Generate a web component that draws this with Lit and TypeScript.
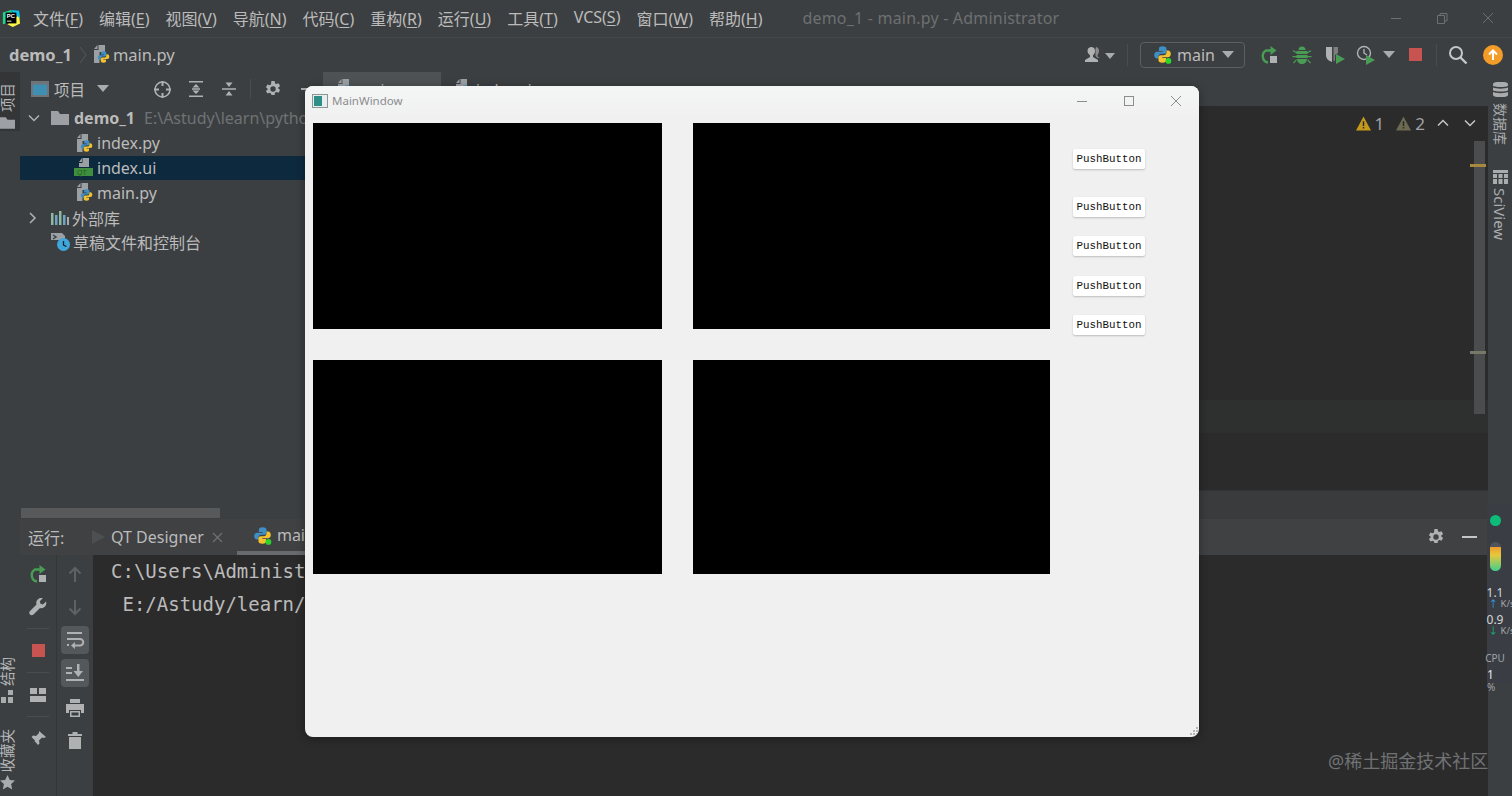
import { LitElement, html, css, svg } from "lit";
import { customElement } from "lit/decorators.js";

const menus = [
  ["文件(", "F", ")"],
  ["编辑(", "E", ")"],
  ["视图(", "V", ")"],
  ["导航(", "N", ")"],
  ["代码(", "C", ")"],
  ["重构(", "R", ")"],
  ["运行(", "U", ")"],
  ["工具(", "T", ")"],
  ["VCS(", "S", ")"],
  ["窗口(", "W", ")"],
  ["帮助(", "H", ")"],
];

const snake = svg`
  <path fill="#3d8fc6" d="M8 1C5.6 1 5 2 5 3.100V5h3.200v.7H3.400C2 5.700 1 6.900 1 8.500s1 2.900 2.300 2.900h1.300V9.700c0-1.300 1-2.300 2.300-2.300h2.700c1 0 1.800-.8 1.800-1.800V3.100C11.400 2 10.400 1 8 1z"/>
  <path fill="#f2c230" d="M8 15c2.400 0 3-1 3-2.100V11H7.800v-.7h4.800c1.400 0 2.400-1.200 2.400-2.800s-1-2.900-2.300-2.900h-1.300v1.700c0 1.300-1 2.300-2.300 2.300H6.400c-1 0-1.800.8-1.800 1.800v2.500C4.600 14 5.600 15 8 15z"/>`;

const py = (dot = false) => html`<svg width="19" height="19" viewBox="0 0 16 16">
  ${snake}${dot ? svg`<circle cx="13" cy="13.400" r="2.400" fill="#2bd62b"/>` : ""}
</svg>`;

const pyFile = html`<svg width="17" height="19" viewBox="0 0 17 19">
  <path fill="#9aa0a4" d="M1 5h4.500V0H12v7H6.500v11H1zM1 4l3.500-4v4z"/>
  <g transform="translate(4 5.500) scale(.82)">${snake}</g>
</svg>`;

const qtFile = html`<svg width="20" height="19" viewBox="0 0 20 19">
  <path fill="#9aa0a4" d="M5 9V5h3.500V0H15v9zM5 4l3-4v4z"/>
  <rect x="0" y="10" width="19" height="8" fill="#3f8f3f"/>
  <text x="3" y="17" font-size="7" font-family="Liberation Sans" fill="#1e5c22">QT</text>
</svg>`;

const folder = html`<svg width="18" height="16" viewBox="0 0 18 16"><path fill="#9da1a5" d="M0 1h7l2 3h9v11H0z"/></svg>`;

const chevDown = html`<svg width="16" height="16" viewBox="0 0 16 16"><path fill="none" stroke="#afb1b3" stroke-width="1.500" d="M3 5.500l5 5 5-5"/></svg>`;
const chevRight = html`<svg width="16" height="16" viewBox="0 0 16 16"><path fill="none" stroke="#afb1b3" stroke-width="1.500" d="M4 3l5 5-5 5"/></svg>`;
const caret = html`<svg width="12" height="8" viewBox="0 0 12 8"><path fill="#a9abad" d="M0 0h12L6 7z"/></svg>`;

const gear = html`<svg width="18" height="18" viewBox="0 0 18 18">
  <path fill="#afb1b3" fill-rule="evenodd" d="M7.400 1h3.200l.4 2.300 1.300.7 2.200-.8 1.600 2.700-1.800 1.500v1.200l1.800 1.500-1.600 2.700-2.200-.8-1.300.7-.4 2.300H7.400L7 13.500l-1.300-.7-2.200.8-1.600-2.700 1.800-1.500V8.700L1.900 7.200l1.600-2.700 2.200.8L7 4.600zM9 6.300a2.700 2.700 0 1 0 0 5.400 2.700 2.700 0 0 0 0-5.400z"/>
</svg>`;

const rerun = html`<svg width="20" height="20" viewBox="0 0 20 20">
  <path fill="none" stroke="#499c54" stroke-width="2.400" d="M9 17.500A6.500 6.500 0 0 1 7 5.500h6"/>
  <path fill="#499c54" d="M11.500 1l6 4.500-6 4.500z"/>
  <rect x="11" y="11" width="7" height="7" fill="#afb1b3"/>
</svg>`;

const stop = html`<svg width="13" height="13" viewBox="0 0 13 13"><rect width="13" height="13" fill="#c75450"/></svg>`;

const warn = (fill: string) => html`<svg width="15" height="15" viewBox="0 0 16 15">
  <path fill="${fill}" d="M8 0l8 15H0z"/><path fill="#2b2b2b" d="M7.200 5h1.600v5.200H7.200zM7.200 11.200h1.600v1.700H7.200z"/>
</svg>`;

@customElement("app-root")
export class AppRoot extends LitElement {
  static styles = css`
    :host {
      display: block;
      position: relative;
      width: 1512px;
      height: 796px;
      overflow: hidden;
      background: #3c3f41;
      color: #bbbbbb;
      font-family: "Noto Sans", "Noto Sans CJK SC", sans-serif;
      font-size: 16px;
    }
    svg {
      display: block;
      flex: none;
    }

    .title {
      display: flex;
      align-items: center;
      height: 37px;
      box-sizing: border-box;
      padding-bottom: 1px;
      white-space: nowrap;
    }
    .logo {
      width: 18px;
      height: 18px;
      margin: 0 4px 0 2px;
    }
    .menu {
      margin-left: 9px;
      display: flex;
      gap: 16px;
      font-size: 16px;
    }
    .menu u {
      text-underline-offset: 2px;
    }
    .app-name {
      margin-left: 40px;
      color: #6d7072;
      font-size: 16px;
      letter-spacing: 0.2px;
    }
    .win-ctrls {
      margin-left: auto;
      display: flex;
      gap: 30px;
      padding-right: 15px;
    }

    .nav {
      display: flex;
      align-items: center;
      height: 35px;
      border-top: 1px solid #45484a;
      box-sizing: border-box;
      padding: 0 0 1px 9px;
      white-space: nowrap;
    }
    .crumb-root {
      font-weight: 700;
      font-size: 16.500px;
    }
    .crumb-sep {
      margin: 0 6px 0 7px;
    }
    .crumb-file {
      margin-left: 3px;
      font-size: 16.500px;
    }
    .nav-tools {
      margin-left: auto;
      display: flex;
      align-items: center;
      padding-right: 9px;
    }
    .vsep {
      width: 1px;
      height: 22px;
      background: #4a4d4f;
    }
    .user-sep {
      margin-left: 11px;
    }
    .config {
      display: flex;
      align-items: center;
      width: 105px;
      height: 26px;
      box-sizing: border-box;
      margin: 0 14px 0 12px;
      padding: 0 10px 0 12px;
      border: 1px solid #5e6060;
      border-radius: 4px;
      gap: 5px;
    }
    .config svg:last-child {
      margin-left: auto;
    }
    .tool-row {
      display: flex;
      align-items: center;
      gap: 13px;
    }
    .tool-row .tight {
      margin-left: -3px;
    }
    .run-caret {
      margin: 0 14px 0 7px;
    }
    .stop-sep {
      margin: 0 11px 0 14px;
    }
    .update {
      margin-left: 15px;
    }

    .body {
      display: flex;
      height: 724px;
    }
    .left-strip {
      width: 20px;
      flex: none;
      display: flex;
      flex-direction: column;
    }
    .strip-active {
      width: 100%;
      height: 59px;
      background: #333537;
      display: flex;
      flex-direction: column;
      padding-top: 11px;
      box-sizing: border-box;
      gap: 4px;
    }
    .strip-active svg {
      width: 15px;
      height: 14px;
    }
    .vtext-up {
      writing-mode: vertical-rl;
      text-orientation: sideways;
      transform: rotate(180deg);
      font-size: 14.500px;
      line-height: 15px;
      color: #b4b6b8;
      align-self: flex-start;
    }
    .vtext-down {
      writing-mode: vertical-rl;
      text-orientation: sideways;
      font-size: 14px;
      line-height: 18px;
      color: #a9abad;
    }
    .strip-bottom {
      margin-top: auto;
      display: flex;
      flex-direction: column;
      padding-bottom: 6px;
      gap: 3px;
    }
    .strip-gap {
      height: 20px;
    }

    .center {
      flex: 1;
      min-width: 0;
      display: flex;
      flex-direction: column;
    }
    .upper {
      display: flex;
      height: 447px;
    }

    .project {
      width: 303px;
      flex: none;
      position: relative;
      white-space: nowrap;
      overflow: hidden;
    }
    .pane-head {
      display: flex;
      align-items: center;
      height: 34px;
      padding-left: 11px;
    }
    .pane-title {
      margin: 0 12px 0 5px;
      font-size: 15.500px;
    }
    .pane-tools {
      margin-left: 44px;
      display: flex;
      align-items: center;
      gap: 15px;
    }
    .pane-tools .vsep {
      height: 20px;
      margin: 0 -2px 0 -3px;
    }
    .pane-min {
      width: 14px;
      height: 2px;
      background: #afb1b3;
      margin-left: 4px;
    }
    .row {
      display: flex;
      align-items: center;
      height: 24.800px;
      padding-left: 5px;
      font-size: 16px;
    }
    .row.child {
      padding-left: 56px;
      gap: 4px;
    }
    .row.selected {
      background: #0d293e;
    }
    .row.selected svg {
      margin-left: -2px;
      margin-right: -1px;
    }
    .row .slot {
      width: 17px;
      display: flex;
      justify-content: center;
      margin-right: 9px;
    }
    .row .slot.none {
      visibility: hidden;
    }
    .row .name {
      margin-left: 5px;
    }
    .row .name.close {
      margin-left: 3px;
    }
    .row.child .name {
      margin-left: 0;
    }
    .bold {
      font-weight: 700;
    }
    .path {
      color: #6f7274;
      margin-left: 9px;
    }
    .hscroll {
      position: absolute;
      left: 1px;
      bottom: 1px;
      width: 199px;
      height: 10px;
      background: #57595b;
    }

    .editor {
      flex: 1;
      min-width: 0;
      display: flex;
      flex-direction: column;
    }
    .tabs {
      height: 34px;
      flex: none;
      display: flex;
    }
    .tab {
      display: flex;
      gap: 4px;
      width: 118px;
      height: 14px;
      overflow: hidden;
      box-sizing: border-box;
      padding: 7px 0 0 14px;
      font-size: 15px;
      line-height: 20px;
      color: #bbbbbb;
      white-space: nowrap;
    }
    .tab.active {
      background: #4e5254;
    }
    .code {
      flex: 1;
      position: relative;
      background: linear-gradient(
        #2b2b2b 0,
        #2b2b2b 294px,
        #2e2f2f 294px,
        #2e2f2f 327px,
        #2b2b2b 327px
      );
    }
    .inspections {
      display: flex;
      justify-content: flex-end;
      align-items: center;
      gap: 4px;
      height: 34px;
      padding-right: 10px;
      font-size: 17px;
      color: #a0a2a4;
    }
    .inspections .warn-one {
      margin-right: 8px;
    }
    .inspections .warn-two {
      margin-right: 6px;
    }
    .inspections svg.up {
      margin-right: 7px;
    }
    .vscroll {
      position: absolute;
      right: 3px;
      top: 35px;
      width: 11px;
      height: 273px;
      background: #4b4c4d;
    }
    .mark {
      position: absolute;
      right: -1px;
      width: 16px;
      height: 3px;
    }
    .mark.warning {
      top: 23px;
      background: #a8883c;
    }
    .mark.weak {
      top: 210px;
      background: #77776a;
    }
    .editor-crumbs {
      height: 28px;
      flex: none;
      background: #393b3d;
      border-top: 1px solid #323435;
    }

    .run {
      flex: 1;
      display: flex;
      flex-direction: column;
      min-height: 0;
    }
    .run-head {
      height: 36px;
      flex: none;
      display: flex;
      align-items: center;
      background: #3f4143;
      padding-left: 8px;
      white-space: nowrap;
      font-size: 16px;
    }
    .run-label {
      width: 64px;
    }
    .run-tab {
      display: flex;
      align-items: center;
      gap: 5px;
      height: 100%;
    }
    .run-tab .dim {
      margin-right: 1px;
    }
    .run-close {
      margin-left: 3px;
      margin-right: 14px;
    }
    .run-tab.main {
      padding-left: 16px;
      width: 280px;
      box-sizing: border-box;
      gap: 5px;
      border-bottom: 4px solid #686a6c;
    }
    .run-side {
      margin-left: auto;
      display: flex;
      align-items: center;
      gap: 17px;
      padding-right: 11px;
    }
    .run-side .line {
      width: 15px;
      height: 2px;
      background: #c4c6c8;
    }
    .run-body {
      flex: 1;
      display: flex;
      min-height: 0;
    }
    .bar {
      width: 37px;
      flex: none;
      display: flex;
      flex-direction: column;
      align-items: center;
      padding-top: 2px;
      border-right: 1px solid #333537;
      box-sizing: border-box;
    }
    .bar.second {
      width: 36px;
      border-right: 0;
    }
    .slot-icon {
      height: 33px;
      display: flex;
      align-items: center;
      justify-content: center;
      width: 28px;
      flex: none;
    }
    .slot-icon.on {
      background: #55585a;
      border-radius: 4px;
      height: 28px;
      margin: 2px 0 3px;
    }
    .slot-icon.pad {
      margin-top: 1px;
    }
    .hr {
      width: 22px;
      height: 1px;
      background: #4a4d4f;
      margin: 5px 0;
    }
    .console {
      flex: 1;
      background: #2b2b2b;
      padding: 0 0 0 18px;
      font-family: "DejaVu Sans Mono", monospace;
      font-size: 19px;
      line-height: 33px;
      color: #bbbbbb;
      white-space: pre;
    }

    .right-strip {
      width: 24px;
      flex: none;
      display: flex;
      flex-direction: column;
      align-items: center;
      padding-top: 10px;
      box-sizing: border-box;
    }
    .right-strip .vtext-down {
      margin: 6px 0 25px;
    }
    .right-strip .vtext-down.latin {
      margin-top: 4px;
      font-size: 15px;
    }
    .monitor {
      position: absolute;
      right: 0;
      top: 505px;
      width: 25px;
      height: 178px;
      box-sizing: border-box;
      padding-right: 9px;
      background: #3a3e44;
      display: flex;
      flex-direction: column;
      align-items: center;
      color: #d4d6d8;
      font-size: 12px;
      line-height: 12px;
    }
    .dot {
      width: 11px;
      height: 11px;
      border-radius: 50%;
      flex: none;
      background: #0dbc79;
      margin: 10px 0 16px;
    }
    .pill {
      width: 11px;
      height: 29px;
      flex: none;
      border-radius: 6px;
      background: linear-gradient(#50535a 0 5px, #f09a2e 5px, #e8c83a 45%, #3fcf8e 100%);
      margin-bottom: 16px;
    }
    .speed {
      text-align: center;
      margin-bottom: 5px;
    }
    .speed small {
      display: block;
      font-size: 9.500px;
      line-height: 10px;
      color: #a0a4a8;
      white-space: nowrap;
      margin-left: 4px;
      margin-right: -9px;
    }
    .speed .up {
      color: #2aa4e8;
    }
    .speed .down {
      color: #0dbc79;
    }
    .cpu {
      margin-top: 11px;
      font-size: 10px;
      color: #a0a4a8;
    }
    .cpu-val {
      margin-top: 5px;
      color: #e4e6e8;
    }
    .cpu-val small {
      font-size: 10px;
      color: #a0a4a8;
    }

    .window {
      position: absolute;
      left: 305px;
      top: 86px;
      width: 894px;
      height: 651px;
      background: #f0f0f0;
      border-radius: 8px;
      overflow: hidden;
      box-shadow: 0 2px 10px rgba(0, 0, 0, 0.35);
      display: flex;
      flex-direction: column;
      color: #111;
    }
    .win-bar {
      height: 29px;
      flex: none;
      display: flex;
      align-items: center;
      padding: 0 0 0 7px;
      background: linear-gradient(#f4f5f5, #f1f1f1);
      color: #8b8d8f;
      font-family: "Noto Sans", sans-serif;
      font-size: 11.500px;
    }
    .win-bar .label {
      margin-left: 4px;
    }
    .win-bar .ctrls {
      margin-left: auto;
      display: flex;
      gap: 35px;
      padding-right: 17px;
    }
    .win-main {
      display: flex;
      padding: 8px 0 0 8px;
    }
    .views {
      display: grid;
      grid-template-columns: 349px 357px;
      grid-template-rows: 206px 214px;
      gap: 31px 30.500px;
    }
    .views div {
      background: #000;
    }
    .buttons {
      margin-left: 23.500px;
      padding-top: 26px;
      display: flex;
      flex-direction: column;
      gap: 19.600px;
    }
    .buttons button {
      width: 72px;
      height: 20px;
      padding: 0;
      border: 0;
      border-radius: 2px;
      background: #fff;
      box-shadow: 0 1px 2px rgba(0, 0, 0, 0.22);
      font-family: "Liberation Mono", monospace;
      font-size: 10.800px;
      color: #111;
    }
    .buttons button:first-child {
      margin-bottom: 8px;
    }
    .grip {
      position: absolute;
      right: 1px;
      bottom: 1px;
    }

    .watermark {
      position: absolute;
      left: 1328px;
      top: 747px;
      font-size: 18px;
      color: #707274;
      white-space: nowrap;
    }
  `;

  renderTitle() {
    return html`<div class="title">
      <svg class="logo" viewBox="0 0 20 20">
        <path fill="#21d789" d="M1 4l9-3 2 4-8 11-3 1z" />
        <path fill="#fcf84a" d="M19 6l1 10-8 4-6-3z" />
        <path fill="#07c3f2" d="M10 1l9 1 1 8-6-4z" />
        <rect x="4" y="4" width="12" height="12" fill="#000" />
        <rect x="5.500" y="13" width="5" height="1" fill="#fff" />
        <text x="5.300" y="10.500" font-size="6.500" font-weight="700" font-family="Liberation Sans" fill="#fff">PC</text>
      </svg>
      <div class="menu">
        ${menus.map((m) => html`<span>${m[0]}<u>${m[1]}</u>${m[2]}</span>`)}
      </div>
      <span class="app-name">demo_1 - main.py - Administrator</span>
      <div class="win-ctrls">
        <svg width="16" height="14" viewBox="0 0 16 14"><path stroke="#6d7072" d="M2 7.500h10" /></svg>
        <svg width="16" height="14" viewBox="0 0 16 14"><path fill="none" stroke="#6d7072" d="M2.500 4.500h7v8h-7zM5 4V2.500h7v7.500h-2" /></svg>
        <svg width="16" height="14" viewBox="0 0 16 14"><path stroke="#6d7072" d="M2 2l10 10M12 2L2 12" /></svg>
      </div>
    </div>`;
  }

  renderNav() {
    return html`<div class="nav">
      <span class="crumb-root">demo_1</span>
      <svg class="crumb-sep" width="8" height="20" viewBox="0 0 8 20"><path fill="none" stroke="#55585a" d="M1 2l6 8-6 8" /></svg>
      ${pyFile}
      <span class="crumb-file">main.py</span>
      <div class="nav-tools">
        <svg width="32" height="18" viewBox="0 0 32 18">
          <path fill="#afb1b3" d="M7 1a4 4 0 0 1 4 4c0 2-1 3.500-2 4.200V11l5 3v2H1v-2l5-3V9.200C5 8.500 3.500 7 3.500 5A4 4 0 0 1 7 1z" />
          <path fill="#8a8c8e" d="M12 1a4 4 0 0 1 3 4c0 2-1 3-1.500 4v1.500l2 1.500h-2l-2-2V3z" />
          <path fill="#a9abad" d="M21 7h10l-5 6z" />
        </svg>
        <div class="vsep user-sep"></div>
        <div class="config">${py(true)}<span>main</span>${caret}</div>
        <div class="tool-row">
          ${rerun}
          <svg width="20" height="20" viewBox="0 0 20 20">
            <path fill="#499c54" d="M6.500 5a3.500 3.500 0 0 1 7 0zM4.500 6h11v3h-11zM4.500 10h11v3h-11zM5 14h10c0 3-2.500 5-5 5s-5-2-5-5zM1 5l3.500 2v1.200L1 6.500zM19 5l-3.500 2v1.200L19 6.500zM.5 11h4v1.200h-4zM15.500 11h4v1.200h-4zM1 17.500L4.500 14v1.500L2 18.500zM19 17.500L15.500 14v1.500l2.500 3z" />
          </svg>
          <svg width="21" height="20" viewBox="0 0 21 20">
            <path fill="#afb1b3" d="M1 2h6v15C4 16 1 14 1 10z" />
            <path fill="#7c7e80" d="M8.500 2H13v6l-3 2v5.500l-1.500 1z" />
            <path fill="#499c54" d="M11 9l9 5-9 5z" />
          </svg>
          <svg class="tight" width="20" height="20" viewBox="0 0 20 20">
            <circle cx="8" cy="8" r="6.500" fill="none" stroke="#afb1b3" stroke-width="1.400" />
            <path fill="none" stroke="#afb1b3" stroke-width="1.400" d="M8 4v4l3 2" />
            <path fill="#499c54" d="M10 10l9 5-9 5z" />
          </svg>
        </div>
        <span class="run-caret">${caret}</span>
        ${stop}
        <div class="vsep stop-sep"></div>
        <svg width="20" height="20" viewBox="0 0 20 20">
          <circle cx="8" cy="8" r="6" fill="none" stroke="#c4c6c8" stroke-width="2" />
          <path stroke="#c4c6c8" stroke-width="2.400" d="M12.500 12.500l6 6" />
        </svg>
        <svg class="update" width="20" height="20" viewBox="0 0 20 20">
          <circle cx="10" cy="10" r="10" fill="#f39c28" />
          <path fill="none" stroke="#fff" stroke-width="2" d="M10 15V6M6 9.500L10 5.500l4 4" />
        </svg>
      </div>
    </div>`;
  }

  renderLeftStrip() {
    return html`<div class="left-strip">
      <div class="strip-active">
        <span class="vtext-up">项目</span>
        ${folder}
      </div>
      <div class="strip-bottom">
        <span class="vtext-up">结构</span>
        <svg width="14" height="14" viewBox="0 0 14 14">
          <path fill="#a9abad" d="M1 8h5v6H1zM8 8h5v6H8zM8 1h5v5H8z" />
        </svg>
        <div class="strip-gap"></div>
        <span class="vtext-up">收藏夹</span>
        <svg width="15" height="15" viewBox="0 0 15 15">
          <path fill="#a9abad" d="M7.500 0l2.300 5 5.200.6-3.900 3.500 1.100 5.400-4.700-2.700-4.700 2.700 1.100-5.400L0 5.600 5.200 5z" />
        </svg>
      </div>
    </div>`;
  }

  renderProject() {
    return html`<div class="project">
      <div class="pane-head">
        <svg width="18" height="16" viewBox="0 0 18 16">
          <rect width="18" height="16" fill="#6e7477" />
          <rect x="2" y="3.500" width="14" height="10.500" fill="#3f8fb5" />
        </svg>
        <span class="pane-title">项目</span>
        ${caret}
        <div class="pane-tools">
          <svg width="19" height="19" viewBox="0 0 19 19">
            <circle cx="9.500" cy="9.500" r="7.500" fill="none" stroke="#afb1b3" stroke-width="1.600" />
            <path stroke="#afb1b3" stroke-width="2" d="M9.500 1v5M9.500 13v5M1 9.500h5M13 9.500h5" />
          </svg>
          <svg width="18" height="18" viewBox="0 0 18 18">
            <path fill="#afb1b3" d="M2 1h14v1.600H2zM2 15.400h14V17H2zM9 4l3.500 3.500h-7zM9 14l-3.500-3.500h7zM5 8.300h8v1.400H5z" />
          </svg>
          <svg width="18" height="18" viewBox="0 0 18 18">
            <path fill="#afb1b3" d="M2 8.200h14v1.600H2zM9 7L5.500 2.500h7zM9 11l3.500 4.500h-7z" />
          </svg>
          <div class="vsep"></div>
          ${gear}
          <div class="pane-min"></div>
        </div>
      </div>
      <div class="row">
        <span class="slot">${chevDown}</span>${folder}
        <span class="name bold">demo_1</span>
        <span class="path">E:\\Astudy\\learn\\python</span>
      </div>
      <div class="row child">${pyFile}<span class="name">index.py</span></div>
      <div class="row child selected">${qtFile}<span class="name">index.ui</span></div>
      <div class="row child">${pyFile}<span class="name">main.py</span></div>
      <div class="row">
        <span class="slot">${chevRight}</span>
        <svg width="18" height="14" viewBox="0 0 18 14">
          <path fill="#8fb8a0" d="M0 2h2.500v12H0z" /><path fill="#6ea4c4" d="M4 4h2.500v10H4z" />
          <path fill="#8fb8a0" d="M8 0h2.500v14H8z" /><path fill="#6ea4c4" d="M12 4h2.500v10H12z" />
          <path fill="#a9abad" d="M16 6h2v8h-2z" />
        </svg>
        <span class="name close">外部库</span>
      </div>
      <div class="row">
        <span class="slot none">${chevRight}</span>
        <svg width="19" height="18" viewBox="0 0 19 18">
          <path fill="#9aa0a4" d="M0 0h11l3 3v4H0z" />
          <path fill="none" stroke="#3c3f41" stroke-width="1.400" d="M2 2l3 2-3 2" />
          <circle cx="12.500" cy="11.500" r="6.500" fill="#3fa7dc" />
          <path fill="none" stroke="#123" stroke-width="1.300" d="M12.500 8v4l3 1.500" />
        </svg>
        <span class="name close">草稿文件和控制台</span>
      </div>
      <div class="hscroll"></div>
    </div>`;
  }

  renderEditor() {
    return html`<div class="editor">
      <div class="tabs">
        <div class="tab active">${pyFile}<span>main.py</span></div>
        <div class="tab">${pyFile}<span>index.ui</span></div>
      </div>
      <div class="code">
        <div class="inspections">
          ${warn("#c49a1a")}<span class="warn-one">1</span>
          ${warn("#6c6a50")}<span class="warn-two">2</span>
          <svg class="up" width="16" height="16" viewBox="0 0 16 16"><path fill="none" stroke="#c4c6c8" stroke-width="1.500" d="M3 10.500l5-5 5 5" /></svg>
          <svg width="16" height="16" viewBox="0 0 16 16"><path fill="none" stroke="#c4c6c8" stroke-width="1.500" d="M3 5.500l5 5 5-5" /></svg>
        </div>
        <div class="vscroll">
          <div class="mark warning"></div>
          <div class="mark weak"></div>
        </div>
      </div>
      <div class="editor-crumbs"></div>
    </div>`;
  }

  renderRun() {
    return html`<div class="run">
      <div class="run-head">
        <span class="run-label">运行:</span>
        <div class="run-tab">
          <svg class="dim" width="13" height="14" viewBox="0 0 13 14"><path fill="#4d5052" d="M0 0l13 7-13 7z" /></svg>
          <span>QT Designer</span>
          <svg class="run-close" width="11" height="11" viewBox="0 0 11 11"><path stroke="#6d7072" stroke-width="1.300" d="M1 1l9 9M10 1l-9 9" /></svg>
        </div>
        <div class="run-tab main">${py(true)}<span>main.py</span></div>
        <div class="run-side">${gear}<div class="line"></div></div>
      </div>
      <div class="run-body">
        <div class="bar">
          <div class="slot-icon">${rerun}</div>
          <div class="slot-icon">
            <svg width="18" height="18" viewBox="0 0 18 18">
              <path fill="#afb1b3" d="M17 3.500l-3 3-2.500-.8-.7-2.500 3-3A5 5 0 0 0 7.500 6.500L1 13c-1 1-1 2.500 0 3.500s2.500 1 3.500 0L11 10a5 5 0 0 0 6-6.500z" />
            </svg>
          </div>
          <div class="hr"></div>
          <div class="slot-icon">${stop}</div>
          <div class="hr"></div>
          <div class="slot-icon">
            <svg width="16" height="14" viewBox="0 0 16 14">
              <path fill="#afb1b3" d="M0 0h7v6H0zM9 0h7v6H9zM0 8h16v6H0z" />
            </svg>
          </div>
          <div class="hr"></div>
          <div class="slot-icon">
            <svg width="18" height="18" viewBox="0 0 18 18">
              <path fill="#afb1b3" d="M10 1l7 6-2 1-2-.5-3 3 .5 3-1.500 1.500L5.500 11 1 17l5-6.500L2.500 7 4 5.500l3 .5 3-3L10 1z" />
            </svg>
          </div>
        </div>
        <div class="bar second">
          <div class="slot-icon">
            <svg width="14" height="16" viewBox="0 0 14 16"><path fill="none" stroke="#5f6264" stroke-width="2" d="M7 16V2M1.500 7.500L7 2l5.500 5.500" /></svg>
          </div>
          <div class="slot-icon pad">
            <svg width="14" height="16" viewBox="0 0 14 16"><path fill="none" stroke="#5f6264" stroke-width="2" d="M7 0v14M1.500 8.500L7 14l5.500-5.500" /></svg>
          </div>
          <div class="slot-icon on">
            <svg width="20" height="18" viewBox="0 0 20 18">
              <path fill="none" stroke="#afb1b3" stroke-width="2" d="M2 2h15M2 8h13a2.500 2.500 0 0 1 0 6.500H9" />
              <path fill="#afb1b3" d="M10 11v7l-4-3.500zM2 13h2v2H2z" />
            </svg>
          </div>
          <div class="slot-icon on">
            <svg width="20" height="18" viewBox="0 0 20 18">
              <path fill="#afb1b3" d="M1 3h6v2H1zM1 8h6v2H1zM1 15h18v2H1zM12 0h2.500v7H18l-4.700 6L8.500 7H12z" />
            </svg>
          </div>
          <div class="slot-icon pad">
            <svg width="18" height="18" viewBox="0 0 18 18">
              <path fill="#afb1b3" d="M4 0h10v4H4zM0 5h18v9h-3v-3H3v3H0zM4 12h10v6H4z" />
              <path fill="#3c3f41" d="M5.500 13.500h7v3h-7z" />
            </svg>
          </div>
          <div class="slot-icon">
            <svg width="14" height="17" viewBox="0 0 14 17">
              <path fill="#afb1b3" d="M0 2h4.500V0h5v2H14v2H0zM1 5h12v12H1z" />
            </svg>
          </div>
        </div>
        <div class="console">C:\\Users\\Administrator
 E:/Astudy/learn/</div>
      </div>
    </div>`;
  }

  renderRightStrip() {
    return html`<div class="right-strip">
      <svg width="15" height="15" viewBox="0 0 15 15">
        <path fill="#a9abad" d="M0 2c0-3 15-3 15 0v1.500c0 2-15 2-15 0zM0 5.500c3 1.500 12 1.500 15 0V8c0 2-15 2-15 0zM0 10c3 1.500 12 1.500 15 0v3c0 3-15 3-15 0z" />
      </svg>
      <span class="vtext-down">数据库</span>
      <svg width="15" height="14" viewBox="0 0 15 14">
        <path fill="#a9abad" d="M0 0h15v3H0zM0 4h4v4H0zM5.500 4h4v4h-4zM11 4h4v4h-4zM0 9h4v5H0zM5.500 9h4v5h-4zM11 9h4v5h-4z" />
      </svg>
      <span class="vtext-down latin">SciView</span>
    </div>`;
  }

  render() {
    return html`
      ${this.renderTitle()} ${this.renderNav()}
      <div class="body">
        ${this.renderLeftStrip()}
        <div class="center">
          <div class="upper">${this.renderProject()} ${this.renderEditor()}</div>
          ${this.renderRun()}
        </div>
        ${this.renderRightStrip()}
      </div>

      <div class="monitor">
        <div class="dot"></div>
        <div class="pill"></div>
        <div class="speed">1.1<small><span class="up">↑</span> K/s</small></div>
        <div class="speed">0.9<small><span class="down">↓</span> K/s</small></div>
        <div class="cpu">CPU</div>
        <div class="cpu-val">1<small> %</small></div>
      </div>

      <div class="window">
        <div class="win-bar">
          <svg width="16" height="14" viewBox="0 0 16 14">
            <rect x=".5" y=".5" width="15" height="13" fill="#e8eeee" stroke="#8b9496" />
            <rect x="2" y="2" width="8" height="10" fill="#2e8f86" />
          </svg>
          <span class="label">MainWindow</span>
          <div class="ctrls">
            <svg width="12" height="12" viewBox="0 0 12 12"><path stroke="#8d8d8d" d="M1 6.500h10" /></svg>
            <svg width="12" height="12" viewBox="0 0 12 12"><rect x="1.500" y="1.500" width="9" height="9" fill="none" stroke="#8d8d8d" /></svg>
            <svg width="12" height="12" viewBox="0 0 12 12"><path stroke="#8d8d8d" d="M1 1l10 10M11 1L1 11" /></svg>
          </div>
        </div>
        <div class="win-main">
          <div class="views"><div></div><div></div><div></div><div></div></div>
          <div class="buttons">
            <button>PushButton</button>
            <button>PushButton</button>
            <button>PushButton</button>
            <button>PushButton</button>
            <button>PushButton</button>
          </div>
        </div>
        <svg class="grip" width="9" height="9" viewBox="0 0 9 9">
          <path fill="#b5b5b5" d="M7 0h2v2H7zM4 3h2v2H4zM7 3h2v2H7zM1 6h2v2H1zM4 6h2v2H4zM7 6h2v2H7z" />
        </svg>
      </div>

      <div class="watermark">@稀土掘金技术社区</div>
    `;
  }
}
